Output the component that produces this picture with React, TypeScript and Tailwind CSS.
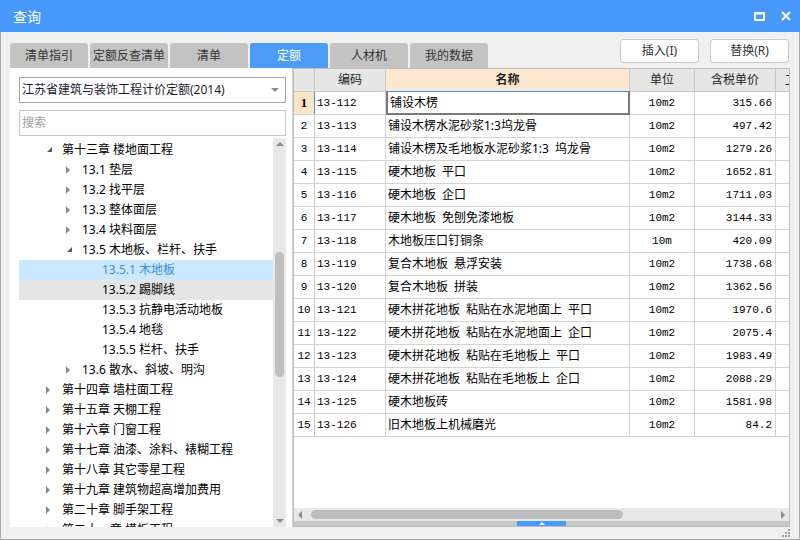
import React from "react";

type Row = { code: string; name: string; unit: string; price: string };

const rows: Row[] = [
    { code: "13-112", name: "铺设木楞", unit: "10m2", price: "315.66" },
    { code: "13-113", name: "铺设木楞水泥砂浆1:3坞龙骨", unit: "10m2", price: "497.42" },
    { code: "13-114", name: "铺设木楞及毛地板水泥砂浆1:3\u2002坞龙骨", unit: "10m2", price: "1279.26" },
    { code: "13-115", name: "硬木地板\u2002平口", unit: "10m2", price: "1652.81" },
    { code: "13-116", name: "硬木地板\u2002企口", unit: "10m2", price: "1711.03" },
    { code: "13-117", name: "硬木地板\u2002免刨免漆地板", unit: "10m2", price: "3144.33" },
    { code: "13-118", name: "木地板压口钉铜条", unit: "10m", price: "420.09" },
    { code: "13-119", name: "复合木地板\u2002悬浮安装", unit: "10m2", price: "1738.68" },
    { code: "13-120", name: "复合木地板\u2002拼装", unit: "10m2", price: "1362.56" },
    { code: "13-121", name: "硬木拼花地板\u2002粘贴在水泥地面上\u2002平口", unit: "10m2", price: "1970.6" },
    { code: "13-122", name: "硬木拼花地板\u2002粘贴在水泥地面上\u2002企口", unit: "10m2", price: "2075.4" },
    { code: "13-123", name: "硬木拼花地板\u2002粘贴在毛地板上\u2002平口", unit: "10m2", price: "1983.49" },
    { code: "13-124", name: "硬木拼花地板\u2002粘贴在毛地板上\u2002企口", unit: "10m2", price: "2088.29" },
    { code: "13-125", name: "硬木地板砖", unit: "10m2", price: "1581.98" },
    { code: "13-126", name: "旧木地板上机械磨光", unit: "10m2", price: "84.2" },
];

type Node = { level: number; label: string; kind: "open" | "closed" | "leaf"; selected?: boolean; hover?: boolean };

const tree: Node[] = [
    { level: 1, label: "第十三章 楼地面工程", kind: "open" },
    { level: 2, label: "13.1 垫层", kind: "closed" },
    { level: 2, label: "13.2 找平层", kind: "closed" },
    { level: 2, label: "13.3 整体面层", kind: "closed" },
    { level: 2, label: "13.4 块料面层", kind: "closed" },
    { level: 2, label: "13.5 木地板、栏杆、扶手", kind: "open" },
    { level: 3, label: "13.5.1 木地板", kind: "leaf", selected: true },
    { level: 3, label: "13.5.2 踢脚线", kind: "leaf", hover: true },
    { level: 3, label: "13.5.3 抗静电活动地板", kind: "leaf" },
    { level: 3, label: "13.5.4 地毯", kind: "leaf" },
    { level: 3, label: "13.5.5 栏杆、扶手", kind: "leaf" },
    { level: 2, label: "13.6 散水、斜坡、明沟", kind: "closed" },
    { level: 1, label: "第十四章 墙柱面工程", kind: "closed" },
    { level: 1, label: "第十五章 天棚工程", kind: "closed" },
    { level: 1, label: "第十六章 门窗工程", kind: "closed" },
    { level: 1, label: "第十七章 油漆、涂料、裱糊工程", kind: "closed" },
    { level: 1, label: "第十八章 其它零星工程", kind: "closed" },
    { level: 1, label: "第十九章 建筑物超高增加费用", kind: "closed" },
    { level: 1, label: "第二十章 脚手架工程", kind: "closed" },
    { level: 1, label: "第二十一章 模板工程", kind: "closed" },
];

const tabs = ["清单指引", "定额反查清单", "清单", "定额", "人材机", "我的数据"];

function Arrow({ kind }: { kind: Node["kind"] }) {
    if (kind === "open")
        return (
            <svg width="6" height="6" viewBox="0 0 6 6" className="ml-[3px]">
                <path d="M5 0 L5 5 L0 5 Z" fill="#5a5a5a" />
            </svg>
        );
    if (kind === "closed")
        return (
            <svg width="5" height="8" viewBox="0 0 5 8" className="ml-[2px]">
                <path d="M0 0 L4 4 L0 8 Z" fill="#8a8a8a" />
            </svg>
        );
    return null;
}

function TreeRow({ node }: { node: Node }) {
    return (
        <div
            className={`flex h-[20px] items-center whitespace-nowrap text-[12px] ${
                node.selected ? "bg-[#cce8ff] text-[#3a8ee0]" : node.hover ? "bg-[#e5e5e5] text-black" : "text-black"
            }`}
        >
            <div className="shrink-0" style={{ width: 25 + (node.level - 1) * 20 }} />
            <div className="flex h-full w-[18px] shrink-0 items-center">
                <Arrow kind={node.kind} />
            </div>
            <span>{node.label}</span>
        </div>
    );
}

function Triangle({ dir, color = "#8a8a8a" }: { dir: "up" | "down" | "left" | "right"; color?: string }) {
    const d = {
        up: "M0 4 L4 0 L8 4 Z",
        down: "M0 0 L8 0 L4 4 Z",
        left: "M4 0 L4 8 L0 4 Z",
        right: "M0 0 L4 4 L0 8 Z",
    }[dir];
    const vertical = dir === "up" || dir === "down";
    return (
        <svg width={vertical ? 8 : 4} height={vertical ? 4 : 8} viewBox={vertical ? "0 0 8 4" : "0 0 4 8"}>
            <path d={d} fill={color} />
        </svg>
    );
}

const mono = "font-['Liberation_Mono','Noto_Sans_CJK_SC',monospace] text-[11px]";

export default function App() {
    return (
        <div className="flex h-[540px] w-[800px] flex-col overflow-hidden bg-[#f0f0f0] font-['Noto_Sans','Noto_Sans_CJK_SC',sans-serif]">
            {/* title bar */}
            <div className="flex h-[32px] shrink-0 items-center bg-[#4699fa] pl-[13px] pr-[9px] text-white">
                <span className="text-[14px]">查询</span>
                <div className="ml-auto flex items-center gap-[16px]">
                    <svg width="11" height="9" viewBox="0 0 11 9">
                        <rect x="1" y="1.5" width="9" height="6.5" fill="none" stroke="white" strokeWidth="2" />
                        <rect x="0" y="0" width="11" height="2" fill="white" />
                    </svg>
                    <svg width="10" height="10" viewBox="0 0 10 10">
                        <path d="M1 1 L9 9 M9 1 L1 9" stroke="white" strokeWidth="2.2" />
                    </svg>
                </div>
            </div>

            <div className="flex flex-1 flex-col border-x border-b border-[#a9a9a9] px-[9px]">
                {/* tabs + buttons */}
                <div className="flex h-[36px] shrink-0 items-end">
                    <div className="flex gap-[2px]">
                        {tabs.map((t) => (
                            <div
                                key={t}
                                className={`flex h-[25px] w-[78px] items-center justify-center rounded-t-[3px] text-[12px] ${
                                    t === "定额" ? "bg-[#4a9cf6] text-white" : "bg-[#c3c3c3] text-[#333]"
                                }`}
                            >
                                {t}
                            </div>
                        ))}
                    </div>
                    <div className="ml-auto flex gap-[11px] self-start pt-[7px] pr-[1px]">
                        <button className="flex h-[24px] w-[79px] items-center justify-center rounded-[3px] border border-[#c9c9c9] bg-white text-[12px] text-[#333]">
                            插入(I)
                        </button>
                        <button className="flex h-[24px] w-[79px] items-center justify-center rounded-[3px] border border-[#c9c9c9] bg-white text-[12px] text-[#333]">
                            替换(R)
                        </button>
                    </div>
                </div>

                {/* main */}
                <div className="flex h-[459px] shrink-0">
                    {/* left panel */}
                    <div className="flex w-[283px] shrink-0 flex-col border-r border-[#d0d0d0] bg-white pt-[9px] pl-[9px] pr-[6px]">
                        <div className="flex h-[26px] shrink-0 items-center border border-[#a6a6a6] pl-[2px] pr-[6px]">
                            <span className="text-[12px] text-[#1c1c2e]">江苏省建筑与装饰工程计价定额(2014)</span>
                            <div className="ml-auto">
                                <Triangle dir="down" color="#8c8c8c" />
                            </div>
                        </div>
                        <div className="mt-[7px] flex h-[26px] shrink-0 items-center border border-[#c6c6c6] pl-[2px]">
                            <span className="text-[12px] text-[#a0a0a0]">搜索</span>
                        </div>
                        <div className="mt-[2px] flex min-h-0 flex-1">
                            <div className="flex-1 overflow-hidden pt-[2px]">
                                {tree.map((n) => (
                                    <TreeRow key={n.label} node={n} />
                                ))}
                            </div>
                            <div className="flex w-[13px] shrink-0 flex-col items-center bg-[#e8e8e8] py-[4px]">
                                <Triangle dir="up" />
                                <div className="mt-[106px] h-[125px] w-[9px] rounded-full bg-[#bfbfbf]" />
                                <div className="mt-auto">
                                    <Triangle dir="down" />
                                </div>
                            </div>
                        </div>
                    </div>

                    {/* right grid */}
                    <div className="flex w-[497px] shrink-0 flex-col border-t border-l border-r border-[#c0c0c0] bg-white">
                        <div className="flex h-[23px] shrink-0 border-b border-[#c8c8c8] text-[12px] text-[#222]">
                            <div className="w-[21px] shrink-0 border-r border-[#c8c8c8] bg-[#e6e6e6]" />
                            <div className="flex w-[71px] shrink-0 items-center justify-center border-r border-[#c8c8c8] bg-[#e6e6e6]">编码</div>
                            <div className="flex w-[244px] shrink-0 items-center justify-center border-r border-[#c8c8c8] bg-[#fde8cf] font-bold">名称</div>
                            <div className="flex w-[65px] shrink-0 items-center justify-center border-r border-[#c8c8c8] bg-[#e6e6e6]">单位</div>
                            <div className="flex w-[81px] shrink-0 items-center justify-center border-r border-[#c8c8c8] bg-[#e6e6e6]">含税单价</div>
                            <div className="flex-1 overflow-hidden whitespace-nowrap bg-[#e6e6e6] pl-[9px] leading-[23px]">工程量</div>
                        </div>
                        {rows.map((r, i) => {
                            const first = i === 0;
                            return (
                                <div key={r.code} className="flex h-[23px] shrink-0 border-b border-[#d4d4d4] text-black">
                                    <div
                                        className={`flex w-[21px] shrink-0 items-center justify-center border-r ${
                                            first
                                                ? "border-[#3d8ef0] bg-[#fce4c7] font-['Liberation_Serif',serif] text-[13px] font-bold"
                                                : `border-[#c8c8c8] ${mono}`
                                        }`}
                                    >
                                        {i + 1}
                                    </div>
                                    <div className={`flex w-[71px] shrink-0 items-center border-r border-[#d4d4d4] pl-[2px] ${mono}`}>{r.code}</div>
                                    <div
                                        className={`flex w-[244px] shrink-0 items-center whitespace-nowrap pl-[2px] text-[12px] ${
                                            first ? "border-t border-l-2 border-r-2 border-b-2 border-t-[#3d8ef0] border-l-[#7a7a7a] border-r-[#7a7a7a] border-b-[#7a7a7a] -mt-px -mb-px" : "border-r border-[#d4d4d4]"
                                        }`}
                                    >
                                        {r.name}
                                    </div>
                                    <div className={`flex w-[65px] shrink-0 items-center justify-center border-r border-[#d4d4d4] ${mono}`}>{r.unit}</div>
                                    <div className={`flex w-[81px] shrink-0 items-center justify-end border-r border-[#d4d4d4] pr-[3px] ${mono}`}>{r.price}</div>
                                    <div className="flex-1" />
                                </div>
                            );
                        })}
                        <div className="flex-1" />
                        {/* horizontal scrollbar */}
                        <div className="flex h-[13px] shrink-0 items-center bg-[#e8e8e8] px-[4px]">
                            <Triangle dir="left" />
                            <div className="ml-[9px] h-[9px] w-[312px] rounded-full bg-[#bdbdbd]" />
                            <div className="ml-auto">
                                <Triangle dir="right" />
                            </div>
                        </div>
                        {/* splitter */}
                        <div className="flex h-[6px] shrink-0 justify-center bg-[#c8c8c8] border-b border-[#c0c0c0]">
                            <div className="flex h-full w-[49px] items-center justify-center bg-[#4699fa]">
                                <svg width="6" height="3" viewBox="0 0 6 3">
                                    <path d="M0 3 L3 0 L6 3 Z" fill="white" />
                                </svg>
                            </div>
                        </div>
                    </div>
                </div>

                {/* bottom strip with resize grip */}
                <div className="flex flex-1 items-end justify-end pb-[2px]">
                    <svg width="8" height="8" viewBox="0 0 8 8">
                        <rect x="6" y="0" width="2" height="2" fill="#a0a0a0" />
                        <rect x="3" y="3" width="2" height="2" fill="#a0a0a0" />
                        <rect x="6" y="3" width="2" height="2" fill="#a0a0a0" />
                        <rect x="0" y="6" width="2" height="2" fill="#a0a0a0" />
                        <rect x="3" y="6" width="2" height="2" fill="#a0a0a0" />
                        <rect x="6" y="6" width="2" height="2" fill="#a0a0a0" />
                    </svg>
                </div>
            </div>
        </div>
    );
}
